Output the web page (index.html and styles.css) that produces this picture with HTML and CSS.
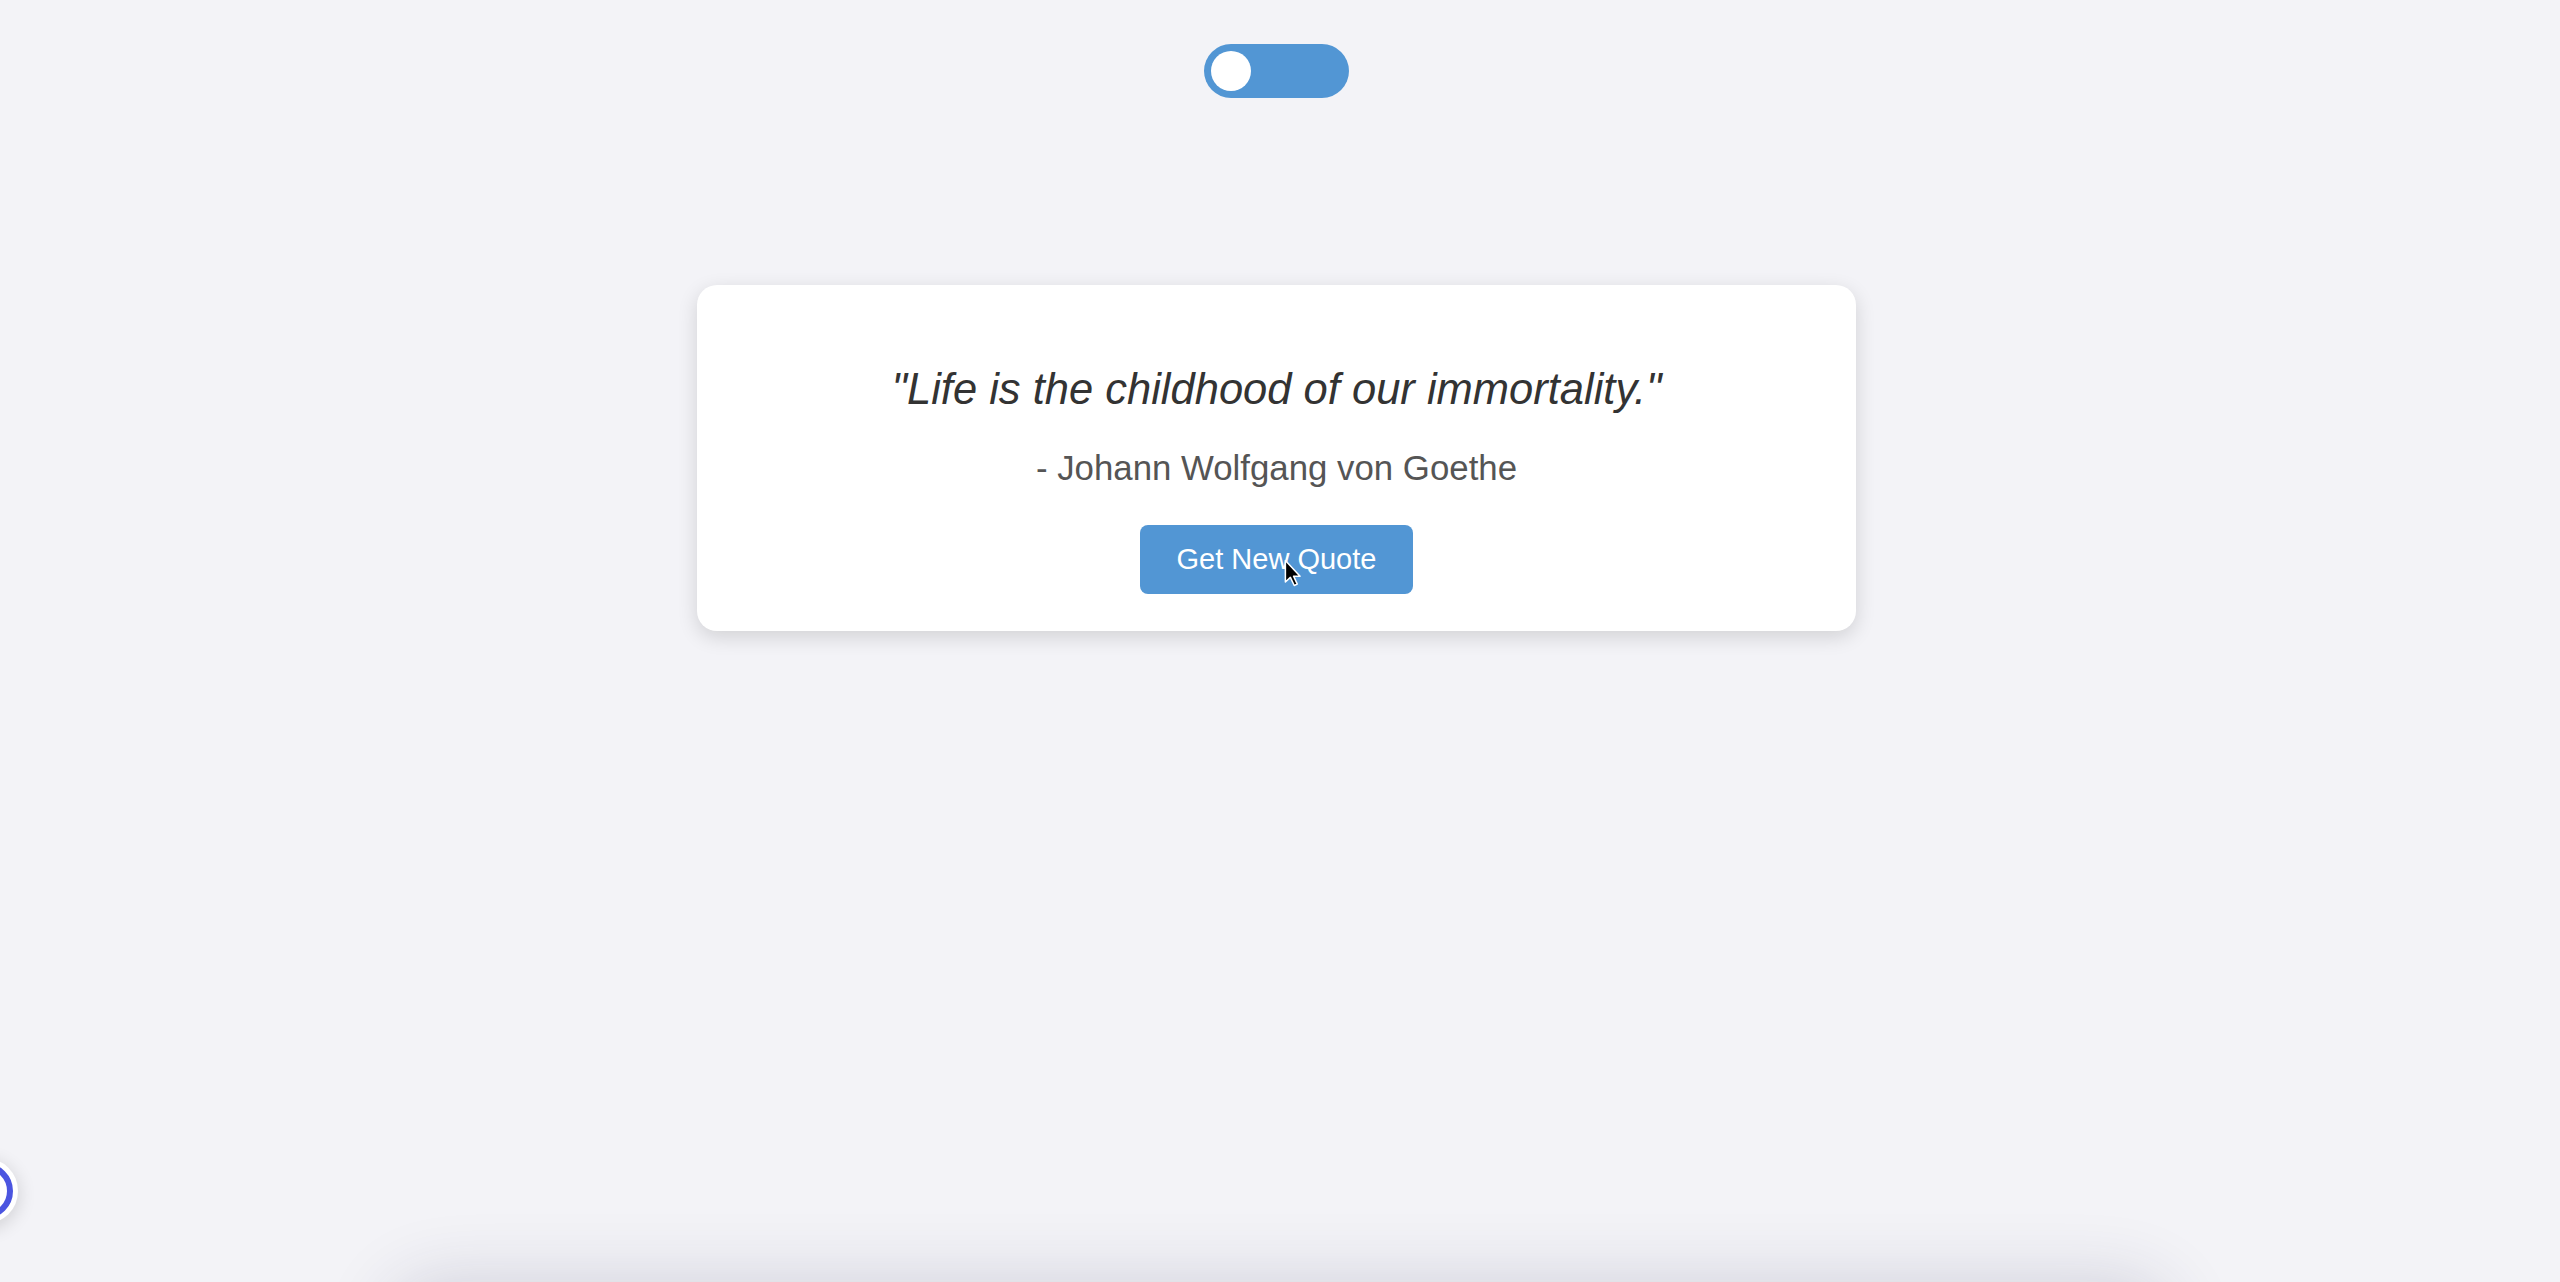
FILE: index.html
```html
<!DOCTYPE html>
<html lang="en">
<head>
<meta charset="utf-8">
<title>Quote Generator</title>
<link rel="stylesheet" href="styles.css">
</head>
<body>
<main class="page">
  <div class="toggle" role="switch" aria-checked="false">
    <span class="knob"></span>
  </div>
  <section class="card">
    <p class="quote">"Life is the childhood of our immortality."</p>
    <p class="author">- Johann Wolfgang von Goethe</p>
    <button class="btn" type="button">Get New Quote<svg class="cursor" viewBox="0 0 13 20" width="18" height="28" aria-hidden="true"><path d="M1 1 L1 16.5 L4.6 13.2 L7.4 19 L9.6 18 L6.9 12.3 L11.6 12.3 Z" fill="#000" stroke="#fff" stroke-width="1.1" stroke-linejoin="round"/></svg></button>
  </section>
</main>
<div class="widget" aria-hidden="true"></div>
<div class="dock-shadow" aria-hidden="true"></div>
</body>
</html>
```
FILE: styles.css
```css
html, body {
  margin: 0;
  padding: 0;
  background: #f3f3f7;
  height: 100%;
  overflow: hidden;
}

body {
  font-family: "Liberation Sans", Arial, sans-serif;
}

.page {
  display: flex;
  flex-direction: column;
  align-items: center;
  padding: 44px 7px 0 0;
}

.toggle {
  box-sizing: border-box;
  width: 145px;
  height: 54px;
  border-radius: 27px;
  background: #5296d4;
  padding: 7px;
  display: flex;
  align-items: center;
}

.knob {
  width: 40px;
  height: 40px;
  border-radius: 50%;
  background: #fff;
}

.card {
  box-sizing: border-box;
  width: 1159px;
  margin-top: 187px;
  padding: 80px 37px 37px;
  background: #fff;
  border-radius: 20px;
  box-shadow: 0 6px 20px rgba(0, 0, 0, 0.14);
  display: flex;
  flex-direction: column;
  align-items: center;
  text-align: center;
}

.quote {
  margin: 0 0 34px;
  font-size: 43.5px;
  line-height: 49px;
  font-style: italic;
  color: #333;
}

.author {
  margin: 0 0 37px;
  font-size: 34.8px;
  line-height: 40px;
  color: #555;
}

.btn {
  position: relative;
  height: 69px;
  padding: 0 36.5px;
  border: none;
  border-radius: 8px;
  background: #5296d4;
  color: #fff;
  font-family: "Liberation Sans", Arial, sans-serif;
  font-size: 29px;
  line-height: 33px;
}

.cursor {
  position: absolute;
  left: 144px;
  top: 34px;
}

.widget {
  position: fixed;
  left: -43px;
  bottom: 63px;
  width: 44px;
  height: 44px;
  border-radius: 50%;
  background: #fff;
  border: 6px solid #4b55e0;
  box-shadow: 0 0 0 5px #fff, 0 4px 18px 6px rgba(0, 0, 0, 0.14);
}

.dock-shadow {
  position: fixed;
  left: 400px;
  right: 400px;
  bottom: -120px;
  height: 110px;
  border-radius: 40px;
  background: #e6e6ea;
  box-shadow: 0 0 70px 12px rgba(40, 40, 80, 0.16);
}
```
